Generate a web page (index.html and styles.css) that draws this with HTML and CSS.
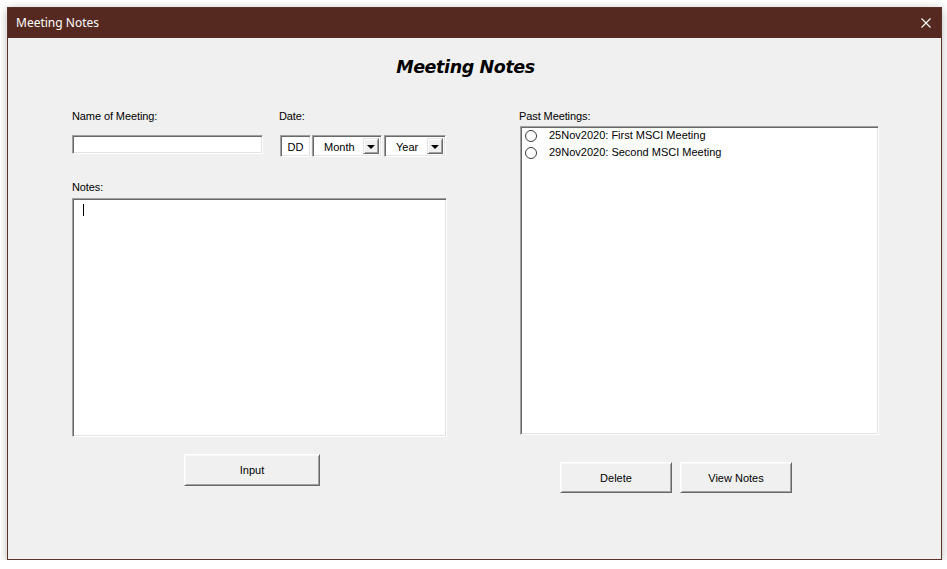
FILE: index.html
```html
<!DOCTYPE html>
<html>
<head>
<meta charset="utf-8">
<title>Meeting Notes</title>
<link rel="stylesheet" href="styles.css">
</head>
<body>
<div class="window">
  <div class="titlebar">
    <span class="title">Meeting Notes</span>
    <svg class="close" width="10" height="10" viewBox="0 0 10 10"><path d="M0.5 0.5 L9.5 9.5 M9.5 0.5 L0.5 9.5" stroke="#fff" stroke-width="1.1" fill="none"/></svg>
  </div>
  <div class="content">
    <h1 class="heading">Meeting Notes</h1>
    <div class="columns">
      <div class="col-left">
        <div class="field-row">
          <div class="name-group">
            <div class="label">Name of Meeting:</div>
            <div class="sunken name-input"></div>
          </div>
          <div class="date-group">
            <div class="label">Date:</div>
            <div class="date-controls">
              <div class="sunken dd">DD</div>
              <div class="sunken combo month"><span class="combo-text">Month</span><span class="drop"><i class="arrow"></i></span></div>
              <div class="sunken combo year"><span class="combo-text">Year</span><span class="drop"><i class="arrow"></i></span></div>
            </div>
          </div>
        </div>
        <div class="label notes-label">Notes:</div>
        <div class="sunken notes"><span class="caret"></span></div>
        <button class="btn input-btn">Input</button>
      </div>
      <div class="col-right">
        <div class="label">Past Meetings:</div>
        <div class="sunken list">
          <div class="item"><span class="radio"></span><span>25Nov2020: First MSCI Meeting</span></div>
          <div class="item"><span class="radio"></span><span>29Nov2020: Second MSCI Meeting</span></div>
        </div>
        <div class="btn-row">
          <button class="btn small-btn">Delete</button>
          <button class="btn small-btn">View Notes</button>
        </div>
      </div>
    </div>
  </div>
</div>
</body>
</html>
```
FILE: styles.css
```css
* { box-sizing: border-box; }
html, body { margin: 0; padding: 0; }
body {
  background: #ffffff;
  padding: 7px 0 0 7px;
  font-family: "Liberation Sans", Arial, sans-serif;
  font-size: 11px;
  color: #000;
}
.window {
  width: 935px;
  height: 553px;
  border: 1px solid #5b3128;
  background: #f0f0f0;
  box-shadow: 0 2px 9px rgba(0,0,0,0.28);
  display: flex;
  flex-direction: column;
}
.titlebar {
  height: 30px;
  background: #55291f;
  display: flex;
  align-items: center;
  justify-content: space-between;
  padding: 0 10px 0 8px;
  color: #fff;
}
.title {
  font-family: "Noto Sans", "Open Sans", sans-serif;
  font-size: 12px;
  margin-top: -1px;
}
.close { display: block; margin-top: 0; }
.content {
  flex: 1;
  padding: 0 0 0 64px;
}
.heading {
  margin: 0;
  padding: 18px 82px 0 0;
  height: 40px;
  line-height: 22px;
  text-align: center;
  font-family: "DejaVu Sans", Verdana, sans-serif;
  font-weight: bold;
  font-style: italic;
  font-size: 17.5px;
  letter-spacing: -0.4px;
}
.columns {
  display: flex;
  margin-top: 32px;
}
.col-left { width: 375px; }
.col-right { width: 360px; margin-left: 72px; }
.label {
  line-height: 13px;
  height: 13px;
  white-space: nowrap;
  letter-spacing: -0.1px;
}
.sunken {
  background: #fff;
  border-top: 1px solid #a0a0a0;
  border-left: 1px solid #a0a0a0;
  border-bottom: 1px solid #fff;
  border-right: 1px solid #fff;
  box-shadow: inset 1px 1px 0 #696969, inset -1px -1px 0 #e3e3e3;
}
.field-row { display: flex; }
.name-group { width: 191px; margin-right: 16px; }
.name-input { margin-top: 12px; width: 191px; height: 19px; }
.date-group { }
.date-controls { display: flex; margin-top: 12px; margin-left: 1px; }
.dd {
  width: 31px; height: 22px;
  display: flex; align-items: center; justify-content: center;
  padding-top: 1px;
}
.combo {
  height: 22px;
  display: flex;
  align-items: stretch;
  padding: 2px;
}
.month { width: 70px; margin-left: 1px; }
.year { width: 62px; margin-left: 2px; }
.combo-text { flex: 1; display: flex; align-items: center; padding-left: 9px; padding-top: 1px; }
.drop {
  width: 16px;
  background: #f0f0f0;
  border-top: 1px solid #e3e3e3;
  border-left: 1px solid #e3e3e3;
  border-bottom: 1px solid #696969;
  border-right: 1px solid #696969;
  box-shadow: inset 1px 1px 0 #fff, inset -1px -1px 0 #a0a0a0;
  display: flex; align-items: center; justify-content: center;
}
.arrow {
  display: block;
  width: 0; height: 0;
  border-left: 4px solid transparent;
  border-right: 4px solid transparent;
  border-top: 4px solid #000;
  margin-top: 1px;
}
.notes-label { margin-top: 24px; }
.notes {
  margin-top: 4px;
  width: 375px;
  height: 239px;
  padding: 3px 0 0 10px;
}
.caret { display: block; width: 1px; height: 12px; background: #000; margin-top: 2px; }
.btn {
  display: block;
  background: #f0f0f0;
  font-family: "Liberation Sans", Arial, sans-serif;
  font-size: 11px;
  color: #000;
  border-top: 1px solid #fff;
  border-left: 1px solid #fff;
  border-bottom: 1px solid #696969;
  border-right: 1px solid #696969;
  box-shadow: inset 1px 1px 0 #f7f7f7, inset -1px -1px 0 #a0a0a0;
  padding: 0;
}
.input-btn { margin: 17px 0 0 112px; width: 136px; height: 32px; }
.list {
  margin-top: 3px;
  margin-left: 1px;
  width: 359px;
  height: 309px;
  padding: 0 0 0 2px;
}
.item {
  height: 16.5px;
  display: flex;
  align-items: center;
  white-space: nowrap;
}
.radio {
  width: 12px; height: 12px;
  border-radius: 50%;
  border: 1.6px solid #3c3c3c;
  background: #fff;
  margin: 2px 12px 0 2px;
  flex: none;
}
.btn-row { display: flex; margin: 27px 0 0 41px; gap: 8px; }
.small-btn { width: 112px; height: 31px; }
```
